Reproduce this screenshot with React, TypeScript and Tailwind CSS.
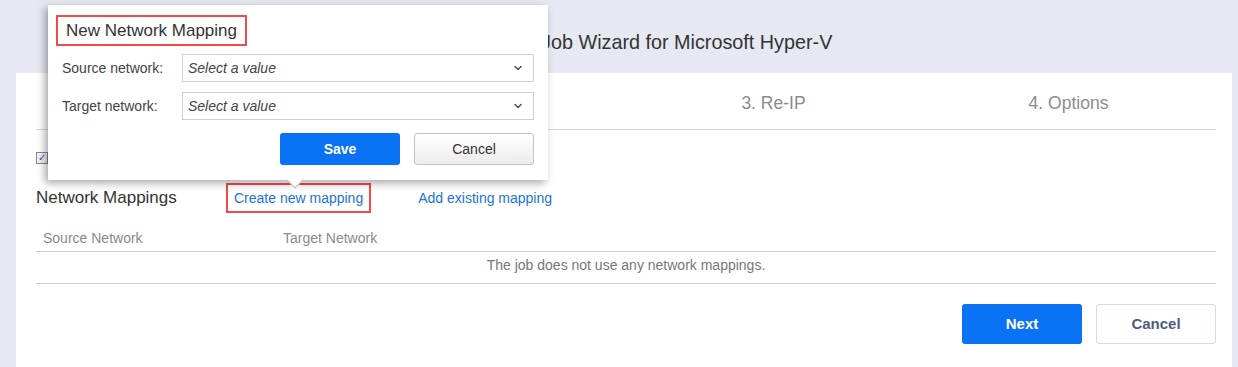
import { ChevronDown } from 'lucide-react'

function Select() {
  return (
    <div className="flex-1 h-[28px] border border-[#cfcfcf] bg-white flex items-center justify-between pl-[5px] pr-[9px]">
      <span className="italic text-[14px] text-[#444]">Select a value</span>
      <ChevronDown size={12} strokeWidth={3.2} className="text-[#555]" />
    </div>
  )
}

function MappingPopup() {
  return (
    <div className="absolute left-[48px] top-[5px] w-[500px] h-[175px] bg-white shadow-[-3px_3px_8px_rgba(0,0,0,0.35)] px-[14px] pt-[10px]">
      <div className="-ml-[6px] inline-flex items-center h-[31px] border-2 border-[#f24a4a] pl-[8px] pr-[8px]">
        <span className="text-[17px] text-[#333]">New Network Mapping</span>
      </div>
      <div className="mt-[8px] flex items-center">
        <span className="w-[120px] text-[14px] text-[#444]">Source network:</span>
        <Select />
      </div>
      <div className="mt-[10px] flex items-center">
        <span className="w-[120px] text-[14px] text-[#444]">Target network:</span>
        <Select />
      </div>
      <div className="mt-[13px] flex justify-end gap-[14px]">
        <button className="w-[120px] h-[32px] rounded-[3px] bg-[#0a72f5] text-white font-bold text-[14px]">
          Save
        </button>
        <button className="w-[120px] h-[32px] rounded-[3px] border border-[#c4c4c4] bg-gradient-to-b from-white to-[#ececec] text-[#333] text-[14px]">
          Cancel
        </button>
      </div>
      <div className="absolute left-[241px] -bottom-[6px] w-[12px] h-[12px] rotate-45 bg-white border-r border-b border-[#bdbdbd]"></div>
    </div>
  )
}

export default function App() {
  const tabs = ['1. Source', '2. Networks', '3. Re-IP', '4. Options']

  return (
    <div className="relative w-[1238px] h-[367px] overflow-hidden bg-[#e6e9f1] font-['Liberation_Sans',Arial,sans-serif]">
      <div className="h-[73px] flex items-center justify-center pt-[13px] pr-[13px]">
        <h1 className="text-[19.8px] text-[#333]">New Replication Job Wizard for Microsoft Hyper-V</h1>
      </div>

      <div className="ml-[16px] mr-[6px] h-[294px] bg-white pl-[20px] pr-[16px]">
        <div className="grid grid-cols-4 h-[57px] items-center pt-[4px] border-b border-[#d6d6d6] text-center text-[17.5px] text-[#8c8c8c]">
          {tabs.map((t) => (
            <div key={t}>{t}</div>
          ))}
        </div>

        <div className="mt-[21px] flex items-center gap-[8px] h-[14px]">
          <span className="w-[12px] h-[12px] border border-[#888] bg-[#eef1f7] flex items-center justify-center text-[10px] leading-none text-[#2b4bb0]">
            ✓
          </span>
          <span className="text-[14px] text-[#333]">Enable network mapping</span>
        </div>

        <div className="mt-[18px] flex items-center h-[30px]">
          <span className="w-[190px] text-[17px] text-[#333]">Network Mappings</span>
          <span className="h-[30px] flex items-center border-2 border-[#f24a4a] px-[6px] text-[14px] text-[#1b73e0]">
            Create new mapping
          </span>
          <span className="ml-[47px] text-[14px] text-[#1b73e0]">Add existing mapping</span>
        </div>

        <div className="mt-[15px] flex h-[24px] items-center border-b border-[#cfcfcf] text-[14px] text-[#8a8a8a] pl-[7px] pb-[2px]">
          <span className="w-[240px]">Source Network</span>
          <span>Target Network</span>
        </div>
        <div className="h-[32px] border-b border-[#cfcfcf] text-center text-[14px] text-[#777] pt-[3px]">
          The job does not use any network mappings.
        </div>

        <div className="mt-[20px] flex justify-end gap-[14px]">
          <button className="w-[120px] h-[40px] rounded-[3px] bg-[#0a72f5] text-white font-bold text-[15px]">
            Next
          </button>
          <button className="w-[120px] h-[40px] rounded-[3px] border border-[#d5dbe5] bg-white text-[#4d5e7c] font-bold text-[15px]">
            Cancel
          </button>
        </div>
      </div>

      <MappingPopup />
    </div>
  )
}
